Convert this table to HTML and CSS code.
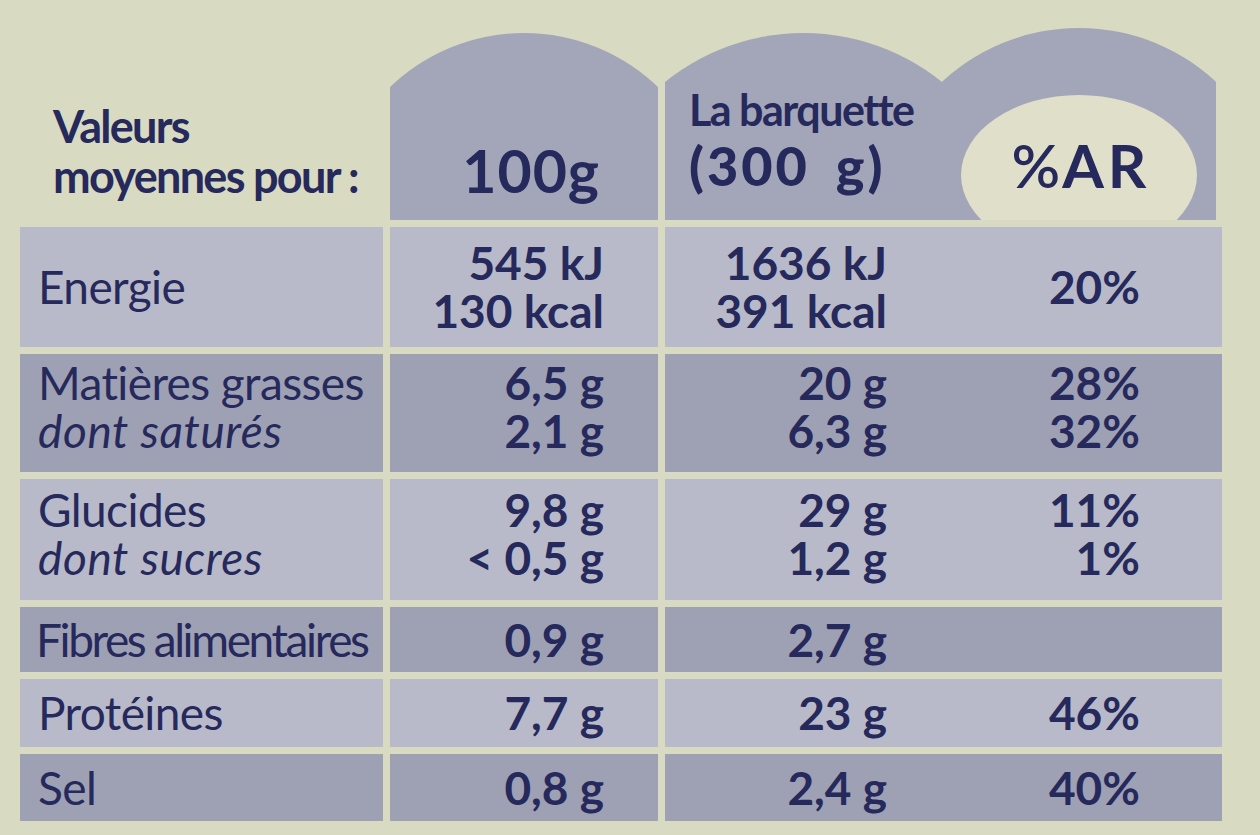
FILE: index.html
```html
<!DOCTYPE html>
<html lang="fr">
<head>
<meta charset="utf-8">
<title>Valeurs nutritionnelles</title>
<link rel="stylesheet" href="styles.css">
</head>
<body>
<div class="label">
  <div class="row head">
    <div class="head-title">Valeurs<br>moyennes pour :</div>
    <div class="tab tab-100"><span>100g</span></div>
    <div class="tabs-right">
      <div class="tab tab-portion">
        <span class="portion-title">La barquette</span>
        <span class="portion-qty">(300 g)</span>
      </div>
      <div class="tab tab-ar">
        <div class="ar-oval"><span class="ar-pc">%</span>AR</div>
      </div>
    </div>
  </div>

  <div class="row light h-energie">
    <div class="cell name">Energie</div>
    <div class="cell per100">545 kJ<br>130 kcal</div>
    <div class="cell portion"><div class="pv">1636 kJ<br>391 kcal</div><div class="pct">20%</div></div>
  </div>

  <div class="row dark h-mg two">
    <div class="cell name">Matières grasses<br><em>dont saturés</em></div>
    <div class="cell per100">6,5 g<br>2,1 g</div>
    <div class="cell portion"><div class="pv">20 g<br>6,3 g</div><div class="pct">28%<br>32%</div></div>
  </div>

  <div class="row light h-gl two">
    <div class="cell name">Glucides<br><em>dont sucres</em></div>
    <div class="cell per100">9,8 g<br>&lt; 0,5 g</div>
    <div class="cell portion"><div class="pv">29 g<br>1,2 g</div><div class="pct">11%<br>1%</div></div>
  </div>

  <div class="row dark h-fib">
    <div class="cell name name-tight">Fibres alimentaires</div>
    <div class="cell per100">0,9 g</div>
    <div class="cell portion"><div class="pv">2,7 g</div><div class="pct"></div></div>
  </div>

  <div class="row light h-prot">
    <div class="cell name">Protéines</div>
    <div class="cell per100">7,7 g</div>
    <div class="cell portion"><div class="pv">23 g</div><div class="pct">46%</div></div>
  </div>

  <div class="row dark h-sel">
    <div class="cell name">Sel</div>
    <div class="cell per100">0,8 g</div>
    <div class="cell portion"><div class="pv">2,4 g</div><div class="pct">40%</div></div>
  </div>
</div>
</body>
</html>
```

FILE: styles.css
```css
* { box-sizing: border-box; }

html, body {
  margin: 0;
  padding: 0;
}

body {
  width: 1260px;
  height: 835px;
  overflow: hidden;
  background: #d8dac1;
  font-family: "Lato", "Open Sans", sans-serif;
  color: #26295b;
}

.label {
  padding: 28px 0 0 20px;
  display: flex;
  flex-direction: column;
  gap: 7px;
}

.row {
  display: grid;
  grid-template-columns: 363px 268px 557px;
  column-gap: 7px;
}

/* ---------- header ---------- */
.head {
  height: 192px;
}

.head-title {
  padding: 73px 0 0 33px;
  font-weight: 700;
  font-size: 45px;
  line-height: 50px;
  letter-spacing: -1.7px;
  white-space: nowrap;
}

.tab {
  background: #a3a5b9;
  height: 192px;
}

.tab-100 {
  clip-path: circle(193px at 50% 198px);
  padding: 113px 58px 0 0;
  text-align: right;
  font-weight: 700;
  font-size: 59px;
  line-height: 59px;
  letter-spacing: 1px;
}

.tabs-right {
  display: flex;
  width: 551px;
}

.tab-portion {
  width: 277px;
  clip-path: circle(220px at 50% 225px);
  padding: 58px 0 0 24px;
  display: flex;
  flex-direction: column;
  font-weight: 700;
  white-space: nowrap;
}

.portion-title {
  font-size: 43px;
  line-height: 48px;
  letter-spacing: -1.5px;
}

.portion-qty {
  margin-top: 2px;
  font-size: 54px;
  font-weight: 900;
  line-height: 60px;
  letter-spacing: 3px;
  word-spacing: 10px;
}

.tab-ar {
  width: 274px;
  clip-path: circle(201px at 50% 201px);
  display: flex;
  justify-content: center;
  padding-top: 67px;
  overflow: hidden;
}

.ar-oval {
  flex: 0 0 auto;
  width: 236px;
  height: 160px;
  border-radius: 50%;
  background: #dfdfca;
  text-align: center;
  padding-top: 40px;
  padding-left: 4px;
  font-weight: 700;
  font-size: 60px;
  line-height: 60px;
  letter-spacing: 4px;
  white-space: nowrap;
}

.ar-pc {
  font-weight: 600;
  letter-spacing: 2px;
}

/* ---------- body rows ---------- */
.light .cell { background: #b8bac9; }
.dark .cell { background: #9ea0b4; }

.h-energie { height: 120px; }
.h-mg { height: 118px; }
.h-gl { height: 121px; }
.h-fib { height: 65px; }
.h-prot { height: 68px; }
.h-sel { height: 67px; }

.cell {
  display: flex;
  flex-direction: column;
  justify-content: center;
  font-size: 46px;
  line-height: 48px;
  white-space: nowrap;
}

.two .cell {
  padding-bottom: 12px;
}

.name {
  padding-left: 18px;
  font-weight: 400;
  letter-spacing: -0.6px;
}

.name em {
  font-style: italic;
  letter-spacing: 0.6px;
}

.name-tight {
  padding-left: 16px;
  letter-spacing: -2.4px;
}

.per100 {
  text-align: right;
  padding-right: 54px;
  font-weight: 700;
}

.portion {
  display: grid;
  grid-template-columns: 222px 253px;
  justify-content: start;
  align-content: center;
  align-items: center;
  text-align: right;
  font-weight: 700;
}
```
